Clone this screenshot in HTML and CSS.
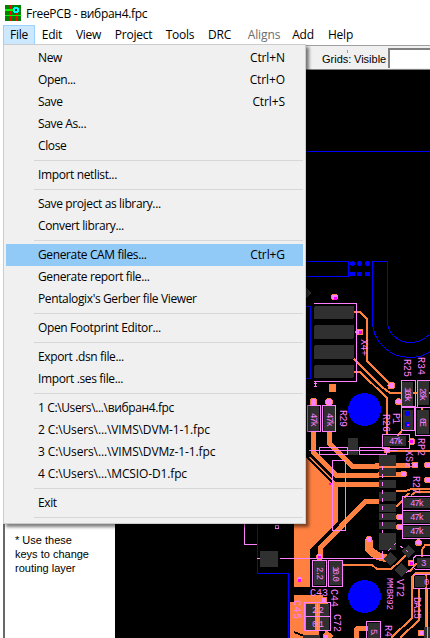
FILE: index.html
```html
<!DOCTYPE html>
<html lang="en">
<head>
<meta charset="utf-8">
<title>FreePCB - вибран4.fpc</title>
<link rel="stylesheet" href="styles.css">
</head>
<body>
<div class="window">
  <header class="titlebar">
    <svg class="logo" width="16" height="16" viewBox="0 0 16 16" shape-rendering="crispEdges">
      <path fill="#008000" d="M0 0h16v16H0z"/>
      <path stroke="#f00" stroke-width="2" d="M6 0v16M11 7v9"/>
      <path stroke="#0f0" stroke-width="1.4" d="M0 5h9M0 10.5h16"/>
      <circle cx="11" cy="5" r="2.3" fill="#003a30" stroke="#0ff" stroke-width="1.5"/>
    </svg>
    <span>FreePCB - вибран4.fpc</span>
  </header>
  <nav class="menubar">
    <span class="tab open">File</span><span class="tab edit">Edit</span><span class="tab view">View</span><span class="tab project">Project</span><span class="tab tools">Tools</span><span class="tab drc">DRC</span><span class="tab aligns">Aligns</span><span class="tab add">Add</span><span class="tab help">Help</span>
  </nav>
  <div class="toolbar"><i class="tick"></i><span class="grids">Grids:</span><span class="visible">Visible</span><span class="field"></span></div>
  <main class="work">
    <aside class="side">* Use these<br>keys to change<br>routing layer</aside>
    <svg class="board" width="315" height="568" viewBox="115 70 315 568" shape-rendering="crispEdges">
      <path fill="#000" d="M115 70h315v568H115z"/>
      <g class="outline">
        <path d="M115 151.500H430M300 261.500h48.500v15H300M387.500 261.500h-15v60a38 36 0 0 0 38 36q11 0 20-6M387.500 261.500v60a23 21 0 0 0 23 21q11 0 20-9M300 306.500h10.500v72H300M257.500 520v53h31v65"/>
      </g>
      <g fill="#00f"><circle cx="352.500" cy="263.500" r="2.500"/><circle cx="359.500" cy="263.500" r="2.500"/><circle cx="367.500" cy="263.500" r="2.500"/><circle cx="352.500" cy="274" r="2.500"/><circle cx="359.500" cy="274" r="2.500"/><circle cx="367.500" cy="274" r="2.500"/></g>
      <g fill="#ff8040">
        <path d="M300 457h10l28 28v36l-28 28v38h-16V500zM290 602h38v29h-9v7h-29zM329 384h7v8h-7z"/>
      </g>
      <g class="trace thin">
        <path d="M354 312h6l7 7v42l25 25M354 359l28 28 8 6h40M354 372h6l27 26v36M355 332h5M387 451h43M340 565h32l5 4h14l9-8 8-8M396 491h10l5-2h19M396 507l5-5 8-9M397 437l6-8M411 495l5-3h14M430 573h-14l-4 4v41l-21 20M419 588v32l-19 18M426 574v64M430 545h-5l-3 5v7M409 572l8-9M422 408v4"/>
      </g>
      <g class="trace wide">
        <path d="M313 432v20l23 23h43M329 432v11l23 23h27M334 484h45M379 501h-13l-46 47v10M375 465h35M378 474h24"/>
        <path stroke-width="8" d="M369 540v9q8 9 18 9M294 599h29"/>
        <path d="M356 638v-6q0-4 4-4h10M325 632l7 6"/>
      </g>
      <path class="cut" d="M302 452l31 31M294 632l15 6"/>
      <g class="via">
        <circle cx="334.500" cy="297" r="3"/><circle cx="360" cy="332" r="3"/><circle cx="391.500" cy="385.500" r="3.500"/><circle cx="313.500" cy="402" r="3.500"/><circle cx="329" cy="402" r="3.500"/><circle cx="398.500" cy="401.500" r="3"/><circle cx="412" cy="441.500" r="3"/><circle cx="387" cy="450" r="3"/><circle cx="415" cy="465" r="3"/><circle cx="427.500" cy="465" r="3"/><circle cx="403.500" cy="474" r="3"/><circle cx="427.500" cy="480" r="3"/><circle cx="399.500" cy="517" r="3"/><circle cx="399.500" cy="527" r="3"/><circle cx="418.500" cy="542.500" r="3"/><circle cx="369" cy="539.500" r="3"/><circle cx="319.500" cy="556.500" r="3"/><circle cx="299.500" cy="579.500" r="3"/><circle cx="324" cy="600" r="3"/><circle cx="326" cy="637" r="3"/><circle cx="421" cy="633" r="3"/><circle cx="411" cy="563" r="3"/>
      </g>
      <path fill="#f0f" d="M334 297h3v3h-3zM359 331h3v3h-3zM329 483h2v2h-2zM410 440h3v3h-3zM410 562h3v3h-3zM318 556h3v3h-3zM298 579h3v3h-3z"/>
      <g fill="#00f"><circle cx="364.500" cy="409.500" r="16.500"/><circle cx="364.500" cy="596.500" r="16.500"/></g>
      <g class="pad">
        <rect x="314" y="306" width="40" height="13" rx="2"/><rect x="314" y="325" width="40" height="14" rx="2"/><rect x="314" y="345" width="40" height="14" rx="2"/><rect x="314" y="365" width="40" height="13" rx="2"/>
        <path d="M306 288l5 5-5 6zM308 406h11v25h-11zM324 406h11v25h-11zM348 438h10v17h-10zM260 551h18v16h-18z"/>
        <path d="M379 455h17v11h-17zM379 468h17v8h-17zM379 480h17v8h-17zM379 492h17v9h-17zM379 504h17v8h-17zM379 513h17v7h-17zM379 522h17v7h-17zM379 533h17v17h-17z"/>
        <path d="M314 561h11v24h-11zM330 561h12v24h-12zM306 604h9v26h-9zM320 604h9v26h-9zM303 635h17v3h-17z"/>
        <path d="M402 382h11v24h-11zM418 380h11v25h-11zM417 410h12v24h-12zM403 410h10v20h-10zM384 436h22v10h-22zM403 498h27v10h-27zM403 512h27v11h-27zM403 526h27v11h-27z"/>
        <path d="M390 552l7 7-6 7-8-7zM409 545l6 7-7 6-7-7zM401 563l7 7-7 7-6-7zM417 558h13v10h-13zM415 576h11v11h-11zM368 623h12v15h-12zM424 627h6v11h-6z"/>
      </g>
      <g class="silk">
        <path d="M314 303.500h42.500v78H314M307.500 405.500h13v26h-13zM322.500 405.500h13v26h-13zM309 450.500h88M319.500 447.500h28v7h-28zM359.500 447.500h27v7h-27zM332.500 460.500h13v70h-13zM244.500 524v20h12M257 558.500h3M280 558.500h102.500v-8M312.500 560.500h14v26h-14zM328.500 560.500h14v26h-14zM304.500 602.500h26v28h-26zM304 616.500h26M317.500 602v28M366.500 638v-16.500h14V638"/>
        <path d="M401.500 380.500h14v26h-14zM417.500 380.500H430M417.500 380v28M415.500 407.500h15v28h-15zM401.500 407.500h13v23h-13zM382.500 434.500h27v14h-27zM402.500 496.500H430M402.500 496v42M402 510.500h28M402 524.500h28M402 538.500h28M430 555.500h-14l-3 3v9l3 2h14M430 574.500h-16.500v14H430M427.500 588v50"/>
        <path stroke-dasharray="4 4" d="M382.500 466v67M388 551l8-8 7 5 5 4M406 573l8-6"/>
        <path d="M275.500 525.500h3v3h-3zM314 383.500h3M315.500 382v5M314 386.500h3"/>
      </g>
      <g fill="#00f"><circle cx="407.500" cy="413.500" r="2.500"/><circle cx="407.500" cy="424.500" r="2.500"/></g>
      <path fill="#f0f" d="M407 424h2v2h-2z"/>
      <g class="mark">
        <text transform="translate(361 339) rotate(90)" textLength="17">X4+</text>
        <text transform="translate(404 359) rotate(90)" textLength="18">R25</text>
        <text transform="translate(418 357) rotate(90)" textLength="18">R34</text>
        <text transform="translate(340 410) rotate(90)" textLength="17">R29</text>
        <text transform="translate(383 414) rotate(90)" textLength="18">R26</text>
        <text transform="translate(393 413) rotate(90)" textLength="11">P1</text>
        <text transform="translate(406 450) rotate(90)" textLength="18">XS2</text>
        <text transform="translate(418 438) rotate(90)" textLength="18">RP2</text>
        <text transform="translate(413 476) rotate(90)" textLength="18">R27</text>
        <text transform="translate(311 413) rotate(90)" textLength="14" class="value">47k</text>
        <text transform="translate(327 413) rotate(90)" textLength="14" class="value">47k</text>
        <text transform="translate(405 387) rotate(90)" textLength="15" class="value">100k</text>
        <text transform="translate(420 388) rotate(90)" textLength="13" class="value">20k</text>
        <text transform="translate(420 418) rotate(90)" textLength="9" class="value">0E</text>
        <text x="389" y="444" textLength="14" class="value">47k</text>
        <text x="410" y="506" textLength="14" class="value">47k</text>
        <text x="410" y="520" textLength="14" class="value">47k</text>
        <text x="410" y="534" textLength="14" class="value">47k</text>
        <text transform="translate(317 567) rotate(90)" textLength="13" class="value">2.2</text>
        <text transform="translate(333 566) rotate(90)" textLength="16" class="value">10.0</text>
        <text x="310" y="596" textLength="18">C43</text>
        <text transform="translate(331 589) rotate(90)" textLength="18">C44</text>
        <text transform="translate(294 600) rotate(90)" textLength="19">C45</text>
        <text transform="translate(334 614) rotate(90)" textLength="18">C72</text>
        <text x="312" y="613" textLength="12" class="value">2.2</text>
        <text x="312" y="627" textLength="12" class="value">0.1</text>
        <text transform="translate(397 579) rotate(90)" textLength="18">VT2</text>
        <text transform="translate(387 578) rotate(90)" textLength="32" class="value">MMBR92</text>
        <text transform="translate(414 597) rotate(90)" textLength="22">DA15</text>
        <text transform="translate(385 625) rotate(90)" textLength="12">R4</text>
        <text transform="translate(371 629) rotate(90)" textLength="8" class="value">5.</text>
        <text x="421" y="566" class="value">3</text><text x="424" y="585" class="value">0</text>
      </g>
    </svg>
  </main>
  <div class="menu">
    <div class="item"><span>New</span><span class="key">Ctrl+N</span></div>
    <div class="item"><span>Open...</span><span class="key">Ctrl+O</span></div>
    <div class="item"><span>Save</span><span class="key">Ctrl+S</span></div>
    <div class="item"><span>Save As...</span></div>
    <div class="item"><span>Close</span></div>
    <hr>
    <div class="item"><span>Import netlist...</span></div>
    <hr>
    <div class="item"><span>Save project as library...</span></div>
    <div class="item"><span>Convert library...</span></div>
    <hr>
    <div class="item active"><span>Generate CAM files...</span><span class="key">Ctrl+G</span></div>
    <div class="item"><span>Generate report file...</span></div>
    <div class="item"><span>Pentalogix's Gerber file Viewer</span></div>
    <hr>
    <div class="item"><span>Open Footprint Editor...</span></div>
    <hr>
    <div class="item"><span>Export .dsn file...</span></div>
    <div class="item"><span>Import .ses file...</span></div>
    <hr>
    <div class="item"><span>1 C:\Users\...\вибран4.fpc</span></div>
    <div class="item path"><span>2 C:\Users\...\VIMS\DVM-1-1.fpc</span></div>
    <div class="item path"><span>3 C:\Users\...\VIMS\DVMz-1-1.fpc</span></div>
    <div class="item path"><span>4 C:\Users\...\MCSIO-D1.fpc</span></div>
    <hr>
    <div class="item"><span>Exit</span></div>
    <hr>
  </div>
</div>
</body>
</html>
```
FILE: styles.css
```css
* { box-sizing: border-box; }
body { margin: 0; background: #fff; color: #000; font: 12px/22px "Open Sans", sans-serif; letter-spacing: -0.25px; }
.window { position: relative; width: 430px; height: 638px; overflow: hidden; display: flex; flex-direction: column; }
.titlebar { height: 25px; padding: 5px 0 0 5px; display: flex; align-items: flex-start; gap: 5px; letter-spacing: -0.3px; }
.titlebar span { line-height: 18px; }
.menubar { height: 20px; padding-left: 3px; display: flex; line-height: 20px; }
.tab { text-align: center; white-space: nowrap; flex: none; }
.open { width: 32px; border: 1px solid #99d1ff; background: #cce8ff; line-height: 18px; }
.edit { width: 34px; }
.view { width: 39px; }
.project { width: 51px; }
.tools { width: 42px; }
.drc { width: 37px; }
.aligns { width: 53px; padding-right: 1px; color: #6d6d6d; letter-spacing: -0.1px; }
.add { width: 24px; }
.help { width: 51px; }
.toolbar { position: relative; height: 25px; margin-left: 3px; border-top: 1px solid #a0a0a0; border-bottom: 1px solid #808080; background: #f0f0f0; display: flex; padding-left: 319px; font: 11px/27px "Liberation Sans", sans-serif; letter-spacing: 0; }
.grids { width: 32px; }
.visible { width: 34px; }
.field { flex: 1; margin: 2px 0 1px; border: solid #808080; border-width: 2px 0 0 2px; background: #fff; }
.tick { position: absolute; left: 344px; top: 4px; width: 1px; height: 3px; background: #a0a0a0; }
.work { height: 568px; margin-left: 3px; display: flex; }
.side { width: 112px; border-left: 2px solid #696969; padding: 463px 0 0 10px; font: 11px/14px "Liberation Sans", sans-serif; letter-spacing: 0; }
.board { display: block; flex: none; }
.menu { position: absolute; left: 3px; top: 44px; width: 303px; height: 480px; padding: 2px; border: 1px solid #ccc; background: #f0f0f0; box-shadow: 3px 3px 3px rgba(0, 0, 0, .5); letter-spacing: -0.37px; }
.menu hr { height: 1px; margin: 3px 0 3px 28px; border: 0; background: #d7d7d7; }
.item { height: 22px; line-height: 22px; padding: 0 18px 0 32px; display: flex; justify-content: space-between; white-space: nowrap; }
.key { letter-spacing: -0.1px; }
.path { letter-spacing: -0.13px; }
.active { background: #91c9f7; }
.outline { fill: none; stroke: #00f; }
.trace { fill: none; stroke: #ff8040; }
.thin { stroke-width: 2; }
.wide { stroke-width: 5; }
.cut { fill: none; stroke: #000; stroke-width: 2; }
.via { fill: #ff80ff; stroke: #ff8040; stroke-width: 1; }
.pad { fill: #303030; }
.silk { fill: none; stroke: #ff80ff; }
.mark { fill: #ff80ff; font: 10px "Liberation Mono", monospace; letter-spacing: 0; }
.value { font-size: 9px; }
```
